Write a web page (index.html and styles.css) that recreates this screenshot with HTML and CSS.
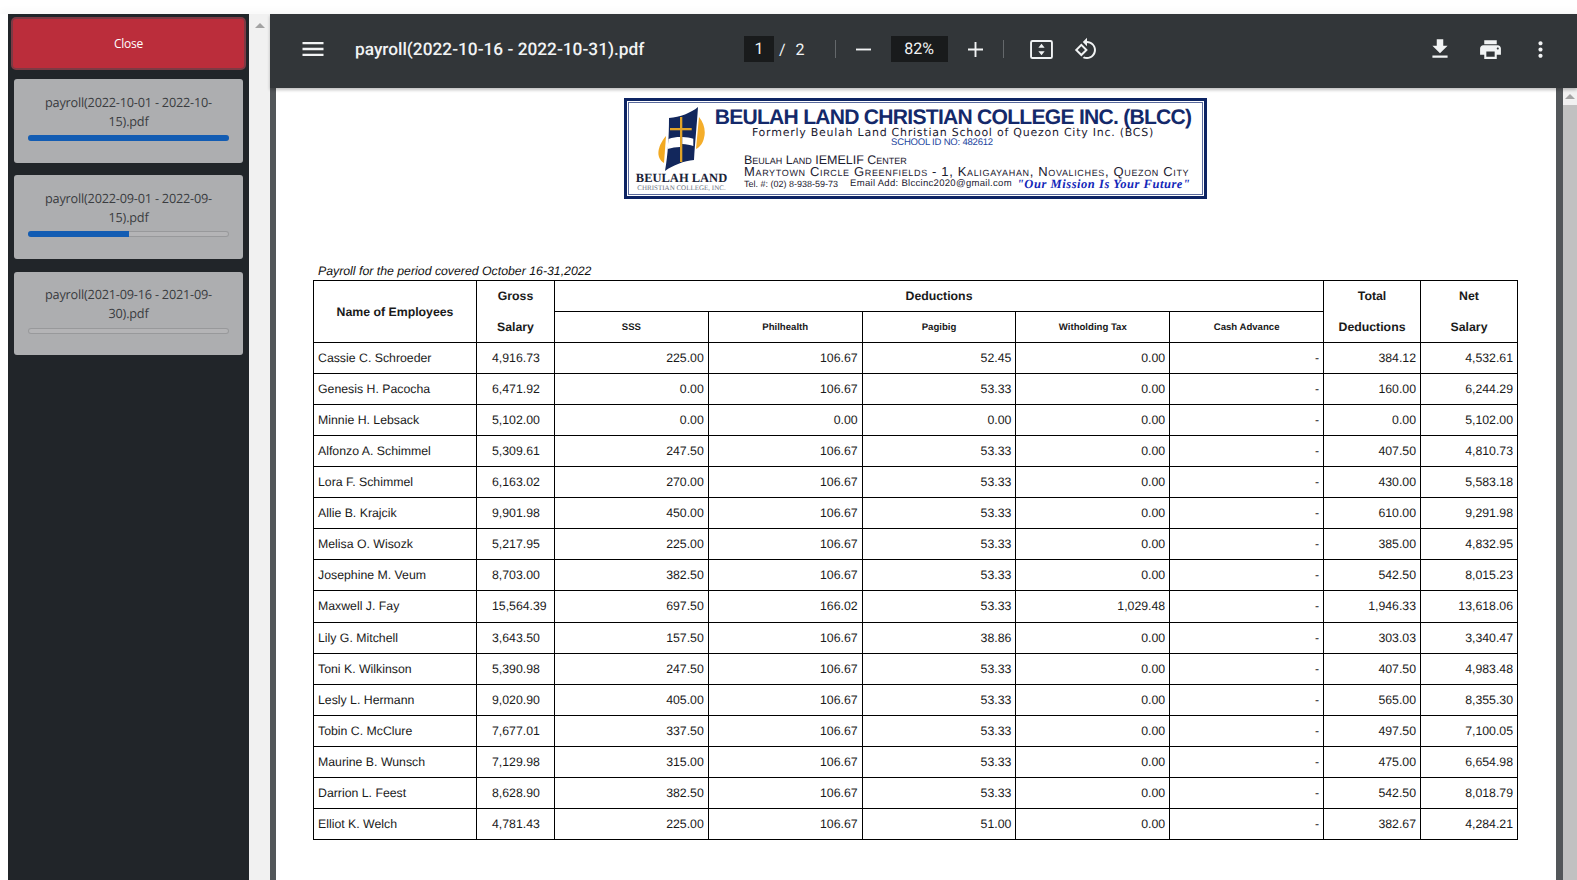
FILE: index.html
```html
<!DOCTYPE html>
<html lang="en">
<head>
  <meta charset="UTF-8">
  <title>Payroll</title>
  <link rel="stylesheet" href="styles.css">
</head>
<body>
  <div class="app">
    <aside class="sidebar">
      <button class="close-btn" type="button">Close</button>
      <div class="card">
        <div class="card-name">payroll(2022-10-01 - 2022-10-15).pdf</div>
        <div class="progress"><div class="progress-bar" style="width: 100%"></div></div>
      </div>
      <div class="card">
        <div class="card-name">payroll(2022-09-01 - 2022-09-15).pdf</div>
        <div class="progress"><div class="progress-bar" style="width: 50%"></div></div>
      </div>
      <div class="card">
        <div class="card-name">payroll(2021-09-16 - 2021-09-30).pdf</div>
        <div class="progress"><div class="progress-bar" style="width: 0%"></div></div>
      </div>
    </aside>

    <div class="side-scroll"><span class="arrow-up"></span></div>

    <main class="viewer">
      <header class="toolbar">
        <svg class="icon icon-menu" viewBox="0 0 24 24"><path d="M3 18h18v-2H3v2zm0-5h18v-2H3v2zm0-7v2h18V6H3z"/></svg>
        <div class="doc-title">payroll(2022-10-16 - 2022-10-31).pdf</div>
        <div class="page-box">1</div>
        <span class="page-slash">/</span>
        <span class="page-total">2</span>
        <span class="sep sep-first"></span>
        <svg class="icon icon-minus" viewBox="0 0 16 16"><path d="M0 7h16v2H0z"/></svg>
        <div class="zoom-box">82%</div>
        <svg class="icon icon-plus" viewBox="0 0 16 16"><path d="M7 0h2v7h7v2H9v7H7V9H0V7h7z"/></svg>
        <span class="sep sep-second"></span>
        <svg class="icon icon-fit" viewBox="0 0 24 20"><path d="M2.5 0h19A2.5 2.5 0 0 1 24 2.500v15a2.500 2.500 0 0 1-2.500 2.500h-19A2.500 2.500 0 0 1 0 17.500v-15A2.500 2.500 0 0 1 2.500 0zm0 2a.5.5 0 0 0-.5.5v15a.5.5 0 0 0 .5.5h19a.5.5 0 0 0 .5-.5v-15a.5.5 0 0 0-.5-.5z"/><path d="M12 4l3.300 4.200H8.700zM12 16l-3.300-4.200h6.600z"/></svg>
        <svg class="icon icon-rotate" viewBox="0 0 24 24"><path d="M7.340 6.410L.860 12.900l6.490 6.480 6.490-6.480-6.500-6.490zM3.690 12.900l3.660-3.660L11 12.900l-3.660 3.660-3.650-3.660zm15.670-6.260C17.610 4.880 15.300 4 13 4V.760L8.760 5 13 9.240V6c1.790 0 3.580.680 4.950 2.050 2.730 2.730 2.730 7.170 0 9.900C16.580 19.320 14.790 20 13 20c-.970 0-1.940-.210-2.840-.610l-1.490 1.490C10.020 21.620 11.510 22 13 22c2.300 0 4.610-.880 6.360-2.640 3.520-3.510 3.520-9.210 0-12.720z"/></svg>
        <div class="toolbar-right">
          <svg class="icon icon-download" viewBox="0 0 24 24"><path d="M19 9h-4V3H9v6H5l7 7 7-7zM5 18v2h14v-2H5z"/></svg>
          <svg class="icon icon-print" viewBox="0 0 24 24"><path d="M19 8H5c-1.660 0-3 1.340-3 3v6h4v4h12v-4h4v-6c0-1.660-1.340-3-3-3zm-3 11H8v-5h8v5zm3-7c-.550 0-1-.450-1-1s.450-1 1-1 1 .450 1 1-.450 1-1 1zm-1-9H6v4h12V3z"/></svg>
          <svg class="icon icon-more" viewBox="0 0 24 24"><path d="M12 8c1.100 0 2-.900 2-2s-.900-2-2-2-2 .900-2 2 .900 2 2 2zm0 2c-1.100 0-2 .900-2 2s.900 2 2 2 2-.900 2-2-.900-2-2-2zm0 6c-1.100 0-2 .900-2 2s.900 2 2 2 2-.900 2-2-.900-2-2-2z"/></svg>
        </div>
      </header>

      <div class="viewer-body">
        <div class="page">
          <div class="letterhead">
            <div class="lh-inner">
              <div class="lh-brand">
                <svg class="lh-emblem" viewBox="0 0 47 64">
                  <path d="M8 29C2 36-1 44 1 50c1 3 3 5 5 6z" fill="#f2a922"/>
                  <path d="M41 10c5 6 7 14 5 21-1 5-4 9-8 11z" fill="#f4ad2a"/>
                  <path d="M11 11C22 10 33 6 40 0c-1 16-3 36-4 53-10 1-21 5-29 11 3-16 4-36 4-53z" fill="#12275c"/>
                  <path d="M22 10h2.300v45H22z" fill="#e0a328"/>
                  <path d="M12 21h21.700v2.300H12z" fill="#e0a328"/>
                  <path d="M10.500 32c4-1.500 8-2 11.500-2v10c-4 0-8 .7-12.500 2zM24.300 30c4 .2 7.700.7 11 1.700V39c-3-1-7-1.700-11-2z" fill="#fff"/>
                </svg>
                <div class="lh-brand-name">BEULAH LAND</div>
                <div class="lh-brand-sub">CHRISTIAN COLLEGE, INC.</div>
              </div>
              <div class="lh-text">
                <div class="lh-title">BEULAH LAND CHRISTIAN COLLEGE INC. (BLCC)</div>
                <div class="lh-former">Formerly Beulah Land Christian School of Quezon City Inc. (BCS)</div>
                <div class="lh-school">SCHOOL ID NO: 482612</div>
                <div class="lh-address">
                  <div class="lh-line">Beulah Land IEMELIF Center</div>
                  <div class="lh-line lh-line-wide">Marytown Circle Greenfields - 1, Kaligayahan, Novaliches, Quezon City</div>
                  <div class="lh-contact">
                    <span>Tel. #: (02) 8-938-59-73</span>
                    <span class="lh-email">Email Add: Blccinc2020@gmail.com</span>
                    <span class="lh-motto">"Our Mission Is Your Future"</span>
                  </div>
                </div>
              </div>
            </div>
          </div>

          <p class="period">Payroll for the period covered October 16-31,2022</p>

          <table class="payroll">
            <colgroup>
              <col class="c-name"><col class="c-gross"><col class="c-ded"><col class="c-ded"><col class="c-ded"><col class="c-ded"><col class="c-ded"><col class="c-total"><col class="c-net">
            </colgroup>
            <thead>
              <tr>
                <th rowspan="2">Name of Employees</th>
                <th class="no-bottom">Gross</th>
                <th colspan="5">Deductions</th>
                <th class="no-bottom">Total</th>
                <th class="no-bottom">Net</th>
              </tr>
              <tr>
                <th class="no-top">Salary</th>
                <th class="sub">SSS</th>
                <th class="sub">Philhealth</th>
                <th class="sub">Pagibig</th>
                <th class="sub">Witholding Tax</th>
                <th class="sub">Cash Advance</th>
                <th class="no-top">Deductions</th>
                <th class="no-top">Salary</th>
              </tr>
            </thead>
            <tbody>
              <tr><td class="name">Cassie C. Schroeder</td><td class="gross">4,916.73</td><td>225.00</td><td>106.67</td><td>52.45</td><td>0.00</td><td>-</td><td>384.12</td><td>4,532.61</td></tr>
              <tr><td class="name">Genesis H. Pacocha</td><td class="gross">6,471.92</td><td>0.00</td><td>106.67</td><td>53.33</td><td>0.00</td><td>-</td><td>160.00</td><td>6,244.29</td></tr>
              <tr><td class="name">Minnie H. Lebsack</td><td class="gross">5,102.00</td><td>0.00</td><td>0.00</td><td>0.00</td><td>0.00</td><td>-</td><td>0.00</td><td>5,102.00</td></tr>
              <tr><td class="name">Alfonzo A. Schimmel</td><td class="gross">5,309.61</td><td>247.50</td><td>106.67</td><td>53.33</td><td>0.00</td><td>-</td><td>407.50</td><td>4,810.73</td></tr>
              <tr><td class="name">Lora F. Schimmel</td><td class="gross">6,163.02</td><td>270.00</td><td>106.67</td><td>53.33</td><td>0.00</td><td>-</td><td>430.00</td><td>5,583.18</td></tr>
              <tr><td class="name">Allie B. Krajcik</td><td class="gross">9,901.98</td><td>450.00</td><td>106.67</td><td>53.33</td><td>0.00</td><td>-</td><td>610.00</td><td>9,291.98</td></tr>
              <tr><td class="name">Melisa O. Wisozk</td><td class="gross">5,217.95</td><td>225.00</td><td>106.67</td><td>53.33</td><td>0.00</td><td>-</td><td>385.00</td><td>4,832.95</td></tr>
              <tr><td class="name">Josephine M. Veum</td><td class="gross">8,703.00</td><td>382.50</td><td>106.67</td><td>53.33</td><td>0.00</td><td>-</td><td>542.50</td><td>8,015.23</td></tr>
              <tr><td class="name">Maxwell J. Fay</td><td class="gross">15,564.39</td><td>697.50</td><td>166.02</td><td>53.33</td><td>1,029.48</td><td>-</td><td>1,946.33</td><td>13,618.06</td></tr>
              <tr><td class="name">Lily G. Mitchell</td><td class="gross">3,643.50</td><td>157.50</td><td>106.67</td><td>38.86</td><td>0.00</td><td>-</td><td>303.03</td><td>3,340.47</td></tr>
              <tr><td class="name">Toni K. Wilkinson</td><td class="gross">5,390.98</td><td>247.50</td><td>106.67</td><td>53.33</td><td>0.00</td><td>-</td><td>407.50</td><td>4,983.48</td></tr>
              <tr><td class="name">Lesly L. Hermann</td><td class="gross">9,020.90</td><td>405.00</td><td>106.67</td><td>53.33</td><td>0.00</td><td>-</td><td>565.00</td><td>8,355.30</td></tr>
              <tr><td class="name">Tobin C. McClure</td><td class="gross">7,677.01</td><td>337.50</td><td>106.67</td><td>53.33</td><td>0.00</td><td>-</td><td>497.50</td><td>7,100.05</td></tr>
              <tr><td class="name">Maurine B. Wunsch</td><td class="gross">7,129.98</td><td>315.00</td><td>106.67</td><td>53.33</td><td>0.00</td><td>-</td><td>475.00</td><td>6,654.98</td></tr>
              <tr><td class="name">Darrion L. Feest</td><td class="gross">8,628.90</td><td>382.50</td><td>106.67</td><td>53.33</td><td>0.00</td><td>-</td><td>542.50</td><td>8,018.79</td></tr>
              <tr><td class="name">Elliot K. Welch</td><td class="gross">4,781.43</td><td>225.00</td><td>106.67</td><td>51.00</td><td>0.00</td><td>-</td><td>382.67</td><td>4,284.21</td></tr>
            </tbody>
          </table>
        </div>
        <div class="page-scroll">
          <span class="arrow-up"></span>
          <div class="page-thumb"></div>
        </div>
      </div>
    </main>
  </div>
</body>
</html>
```

FILE: styles.css
```css
* {
  box-sizing: border-box;
}

html, body {
  height: 100%;
  margin: 0;
  overflow: hidden;
}

body {
  background-color: #fff;
  font-family: "Open Sans", sans-serif;
  text-rendering: geometricPrecision;
}

.app {
  display: flex;
  height: 866px;
  margin-top: 14px;
  padding-left: 8px;
  box-shadow: 0 -3px 8px rgba(0, 0, 0, 0.03);
}

/* lista de arquivos */
.sidebar {
  width: 241px;
  flex-shrink: 0;
  background-color: #212529;
  padding: 3px 3px 0;
}

.close-btn {
  display: block;
  width: 235px;
  height: 53px;
  background-color: #bb2d3b;
  border: 2px solid #7d3a44;
  border-radius: 5px;
  color: #fff;
  font-family: "Open Sans", sans-serif;
  font-size: 12px;
  letter-spacing: -0.3px;
  margin-bottom: 9px;
}

.card {
  width: 229px;
  height: 84px;
  margin: 0 3px 12px;
  padding: 14px 14px 0;
  background-color: #adaeb0;
  border-radius: 3px;
  text-align: center;
}

.card:nth-of-type(2) {
  margin-bottom: 13px;
}

.card:last-child {
  height: 83px;
  padding-top: 13px;
}

.card-name {
  color: #3a3c40;
  font-size: 12.7px;
  line-height: 19px;
  letter-spacing: -0.2px;
  padding: 0 7px;
}

.progress {
  height: 6px;
  margin-top: 4px;
  background-color: #b4b4b6;
  box-shadow: inset 0 0 0 1px #98999b;
  border-radius: 3px;
  overflow: hidden;
}

.card:last-child .progress {
  margin-top: 5px;
}

.progress-bar {
  height: 100%;
  background-color: #125cb3;
}

.side-scroll {
  width: 21px;
  flex-shrink: 0;
  background-color: #f1f1f1;
  padding: 9px 6px 0;
}

.arrow-up {
  display: block;
  width: 0;
  height: 0;
  border-left: 5px solid transparent;
  border-right: 5px solid transparent;
  border-bottom: 5px solid #a3a3a3;
}

/* visualizador de pdf */
.viewer {
  flex: 1;
  min-width: 0;
  display: flex;
  flex-direction: column;
  background-color: #525659;
}

.toolbar {
  height: 74px;
  flex-shrink: 0;
  display: flex;
  align-items: center;
  padding-bottom: 4px;
  background-color: #323639;
  color: #f1f3f4;
  font-family: Roboto, sans-serif;
  box-shadow: 0 2px 3px rgba(0, 0, 0, 0.25);
  position: relative;
}

.icon {
  display: block;
  flex-shrink: 0;
  fill: #f1f3f4;
}

.icon-menu {
  width: 28px;
  height: 28px;
  margin-left: 29px;
}

.doc-title {
  width: 389px;
  margin-left: 28px;
  padding-top: 2px;
  font-size: 17.3px;
  font-weight: 500;
  white-space: nowrap;
}

.page-box {
  width: 30px;
  height: 26px;
  background-color: #191b1c;
  text-align: center;
  font-size: 16px;
  line-height: 25px;
}

.page-slash {
  margin-left: 5px;
  font-size: 16px;
}

.page-total {
  margin-left: 10px;
  font-size: 16px;
}

.sep {
  width: 1px;
  height: 18px;
  background-color: #64686b;
}

.sep-first {
  margin-left: 30px;
}

.sep-second {
  margin-left: 20px;
}

.icon-minus {
  width: 15px;
  height: 15px;
  margin-left: 20px;
}

.zoom-box {
  width: 57px;
  height: 26px;
  margin-left: 20px;
  background-color: #191b1c;
  text-align: center;
  font-size: 16px;
  line-height: 25px;
}

.icon-plus {
  width: 15px;
  height: 15px;
  margin-left: 20px;
}

.icon-fit {
  width: 23px;
  height: 19px;
  margin-left: 26px;
}

.icon-rotate {
  width: 24px;
  height: 24px;
  margin-left: 21px;
}

.toolbar-right {
  margin-left: auto;
  display: flex;
  align-items: center;
  padding-right: 24px;
}

.icon-download {
  width: 26px;
  height: 26px;
}

.icon-print {
  width: 25px;
  height: 25px;
  margin-left: 25px;
}

.icon-more {
  width: 25px;
  height: 25px;
  margin-left: 25px;
}

.viewer-body {
  flex: 1;
  min-height: 0;
  display: flex;
  padding-left: 6px;
}

.page {
  width: 1280px;
  flex-shrink: 0;
  background-color: #fff;
  padding: 10px 0 0 37px;
  overflow: hidden;
}

.page-scroll {
  width: 14px;
  margin-left: 7px;
  flex-shrink: 0;
  background-color: #f1f1f1;
  display: flex;
  flex-direction: column;
  align-items: center;
  padding-top: 6px;
}

.page-thumb {
  width: 100%;
  flex: 1;
  margin-top: 6px;
  background-color: #c1c1c1;
}

/* cabecalho da escola */
.letterhead {
  width: 583px;
  height: 101px;
  margin-left: 311px;
  border: 3px solid #0d2463;
  background-color: #fff;
  padding: 1px;
}

.lh-inner {
  height: 100%;
  display: flex;
  border: 1px solid #5a6a9c;
  padding: 0 9px 0 6px;
}

.lh-brand {
  width: 93px;
  flex-shrink: 0;
  display: flex;
  flex-direction: column;
  align-items: center;
  padding-top: 4px;
}

.lh-emblem {
  display: block;
  width: 47px;
  height: 64px;
  flex-shrink: 0;
}

.lh-brand-name {
  margin-top: 1px;
  color: #1a2338;
  font-family: "Liberation Serif", serif;
  font-size: 12.5px;
  font-weight: bold;
  line-height: 13px;
  white-space: nowrap;
}

.lh-brand-sub {
  color: #6d7382;
  font-family: "Liberation Serif", serif;
  font-size: 7px;
  line-height: 7px;
  white-space: nowrap;
}

.lh-text {
  flex: 1;
  min-width: 0;
  margin-left: -15px;
  text-align: center;
  color: #1c2030;
}

.lh-title {
  color: #14296a;
  font-family: "Liberation Sans", sans-serif;
  font-size: 21.1px;
  font-weight: bold;
  line-height: 20px;
  letter-spacing: -0.75px;
  white-space: nowrap;
  margin-top: 5px;
}

.lh-former {
  font-family: "DejaVu Sans", sans-serif;
  font-size: 11px;
  line-height: 9px;
  letter-spacing: 0.75px;
  white-space: nowrap;
}

.lh-school {
  padding-right: 22px;
  color: #1d46a0;
  font-family: "Liberation Sans", sans-serif;
  font-size: 9.5px;
  line-height: 11px;
  letter-spacing: -0.2px;
}

.lh-address {
  text-align: left;
  padding-left: 31px;
  margin-top: 7px;
}

.lh-line {
  font-family: "Liberation Sans", sans-serif;
  font-size: 12.5px;
  font-variant: small-caps;
  line-height: 11px;
  white-space: nowrap;
}

.lh-line-wide {
  font-size: 13px;
  letter-spacing: 0.65px;
}

.lh-contact {
  display: flex;
  align-items: center;
  font-family: "Liberation Sans", sans-serif;
  font-size: 9px;
  line-height: 14px;
  white-space: nowrap;
}

.lh-email {
  margin-left: 12px;
  font-size: 9.5px;
  letter-spacing: 0.3px;
}

.lh-motto {
  margin-left: 5px;
  color: #1226b8;
  font-family: "Liberation Serif", serif;
  font-size: 12.5px;
  font-style: italic;
  font-weight: bold;
  letter-spacing: 0.55px;
}

/* tabela */
.period {
  margin: 65px 0 2px 5px;
  font-family: "Liberation Sans", sans-serif;
  font-size: 12.3px;
  font-style: italic;
  line-height: 14px;
  color: #111;
}

.payroll {
  width: 1204px;
  table-layout: fixed;
  border-collapse: collapse;
  font-family: "Liberation Sans", sans-serif;
  font-size: 12.3px;
  color: #1a1a1a;
}

.c-name { width: 163px; }
.c-gross { width: 78px; }
.c-ded { width: 153.8px; }
.c-total { width: 97px; }
.c-net { width: 97px; }

.payroll tr {
  height: 31.06px;
}

.payroll th,
.payroll td {
  border: 1px solid #000;
  padding: 0 4px;
  white-space: nowrap;
  overflow: hidden;
}

.payroll th {
  font-size: 12.3px;
  font-weight: bold;
  text-align: center;
}

.payroll th.sub {
  font-size: 9.6px;
}

.payroll th.no-bottom {
  border-bottom: none;
}

.payroll th.no-top {
  border-top: none;
}

.payroll td {
  text-align: right;
}

.payroll td.name {
  text-align: left;
}

.payroll td.gross {
  padding-left: 15px;
  text-align: left;
}
```
